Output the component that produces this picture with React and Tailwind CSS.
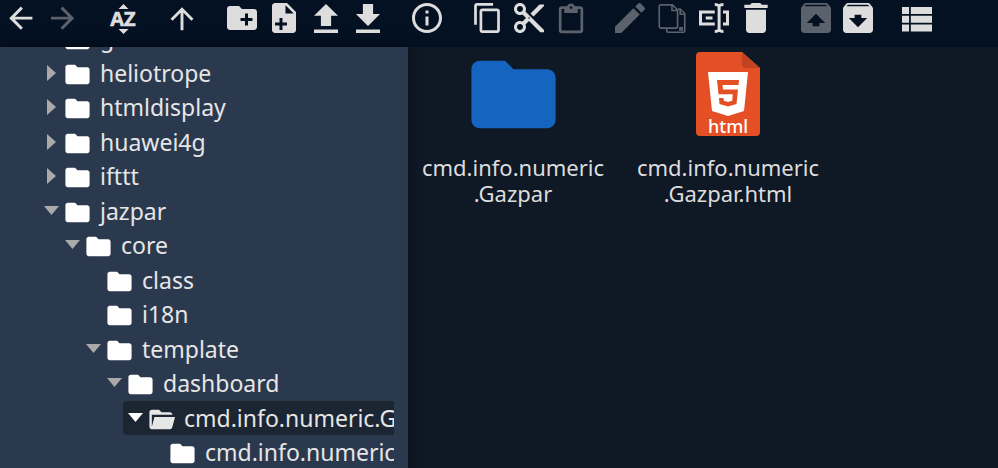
import React from 'react';
import clsx from 'clsx';

const ARCHIVE_BOX =
  'M20.54 5.23l-1.39-1.68C18.88 3.21 18.47 3 18 3H6c-.47 0-.88.21-1.16.55L3.46 5.23C3.17 5.57 3 6.02 3 6.5V19c0 1.1.9 2 2 2h14c1.1 0 2-.9 2-2V6.5c0-.48-.17-.93-.46-1.27z';

const FOLDER =
  'M10 4H4c-1.11 0-2 .89-2 2v12c0 1.1.89 2 2 2h16c1.1 0 2-.9 2-2V8c0-1.11-.9-2-2-2h-8l-2-2z';

const FOLDER_OPEN =
  'M19 20H4c-1.11 0-2-.9-2-2V6c0-1.11.89-2 2-2h6l2 2h7c1.1 0 2 .9 2 2H4v10l2.14-8h17.07l-2.28 8.5c-.23.87-1.01 1.5-1.93 1.5z';

// every glyph is drawn on a 24x24 grid, box overrides the view box
const icons = {
  back: {
    box: '-0.1 -0.4 24.6 24.6',
    d: 'M20 11v2H8l5.5 5.5-1.42 1.42L4.16 12l7.92-7.92L13.5 5.5 8 11h12z',
  },
  forward: {
    box: '-0.1 -0.4 24.6 24.6',
    d: 'M4 11v2h12l-5.5 5.5 1.42 1.42L19.84 12l-7.92-7.92L10.5 5.5 16 11H4z',
  },
  up: {
    box: '-0.4 -0.8 24.8 24.8',
    d: 'M13 20h-2V8l-5.5 5.5-1.42-1.42L12 4.16l7.92 7.92-1.42 1.42L13 8v12z',
  },
  newFolder: {
    d: 'M20 6h-8l-2-2H4c-1.11 0-1.99.89-1.99 2L2 18c0 1.11.89 2 2 2h16c1.11 0 2-.89 2-2V8c0-1.11-.89-2-2-2zm-1 8h-3v3h-2v-3h-3v-2h3V9h2v3h3v2z',
  },
  newFile: {
    d: 'M14 2H6c-1.11 0-2 .9-2 2v16c0 1.1.9 2 2 2h12c1.1 0 2-.9 2-2V8l-6-6zm-1 7V3.5L18.5 9H13zm-2 6v-3H9v3H6v2h3v3h2v-3h3v-2h-3z',
  },
  upload: { d: 'M8.6 17.4h6.8v-6.9H20l-8-7.9-8 7.9h4.6v6.9zM4 19.6h16V22H4v-2.4z' },
  download: { d: 'M20 9.4h-4.6V2.6H8.6v6.8H4l8 8 8-8zM4 19.6h16V22H4v-2.4z' },
  info: {
    d: 'M11 17h2v-6h-2v6zm1-15C6.48 2 2 6.48 2 12s4.48 10 10 10 10-4.48 10-10S17.52 2 12 2zm0 18c-4.41 0-8-3.59-8-8s3.59-8 8-8 8 3.59 8 8-3.59 8-8 8zM11 9h2V7h-2v2z',
  },
  copy: {
    box: '-1.8 -1.3 26.6 26.6',
    d: 'M16 1H4c-1.1 0-2 .9-2 2v14h2V3h12V1zm3 4H8c-1.1 0-2 .9-2 2v14c0 1.1.9 2 2 2h11c1.1 0 2-.9 2-2V7c0-1.1-.9-2-2-2zm0 16H8V7h11v14z',
  },
  cut: {
    d: 'M9.64 7.64c.23-.5.36-1.05.36-1.64 0-2.21-1.79-4-4-4S2 3.79 2 6s1.79 4 4 4c.59 0 1.14-.13 1.64-.36L10 12l-2.36 2.36C7.14 14.13 6.59 14 6 14c-2.21 0-4 1.79-4 4s1.79 4 4 4 4-1.79 4-4c0-.59-.13-1.14-.36-1.64L12 14l7.5 7.5H22v-1.5L9.64 7.64zM6 8c-1.1 0-2-.89-2-2s.9-2 2-2 2 .89 2 2-.9 2-2 2zm0 12c-1.1 0-2-.89-2-2s.9-2 2-2 2 .89 2 2-.9 2-2 2zm6-7.5c-.28 0-.5-.22-.5-.5s.22-.5.5-.5.5.22.5.5-.22.5-.5.5zM19 3l-6 6 2 2 7-7V3z',
  },
  paste: {
    box: '-1.3 -2.6 26.6 26.6',
    d: 'M19 2h-4.18C14.4.84 13.3 0 12 0c-1.3 0-2.4.84-2.82 2H5c-1.1 0-2 .9-2 2v16c0 1.1.9 2 2 2h14c1.1 0 2-.9 2-2V4c0-1.1-.9-2-2-2zm-7 0c.55 0 1 .45 1 1s-.45 1-1 1-1-.45-1-1 .45-1 1-1zm7 18H5V4h2v3h10V4h2v16z',
  },
  edit: {
    box: '1.2 1.2 21.6 21.6',
    d: 'M3 17.25V21h3.75L17.81 9.94l-3.75-3.75L3 17.25zM20.71 7.04c.39-.39.39-1.02 0-1.41l-2.34-2.34c-.39-.39-1.02-.39-1.41 0l-1.83 1.83 3.75 3.75 1.83-1.83z',
  },
  duplicate: {
    d: 'M4.5 3.2h7.8l3.4 3.5v11c0 .6-.4 1-1 1H4.5c-.6 0-1-.4-1-1V4.200c0-.6.4-1 1-1zM12 3v4h4M16 6h1.500l3 3v11.500c0 .6-.4 1-1 1h-10c-.6 0-1-.4-1-1V19M17.500 6.500V9.500H21M17.300 18.500h1.500v1.500h-1.500z',
    stroke: 1.1,
  },
  rename: {
    d: 'M12.5 3c1.2 0 2.3.4 2.900 1 .6-.6 1.700-1 2.900-1M12.500 21c1.200 0 2.300-.4 2.900-1 .6.6 1.700 1 2.900 1M15.400 4v16M12.500 8H3v8h9.500M18 8h3v8h-3M6.500 12H11',
    stroke: 2,
  },
  remove: {
    box: '1.2 1.2 21.6 21.6',
    d: 'M6 19c0 1.1.9 2 2 2h8c1.1 0 2-.9 2-2V7H6v12zM19 4h-3.5l-1-1h-5l-1 1H5v2h14V4z',
  },
  extract: {
    box: '1.2 1.2 21.6 21.6',
    d: ARCHIVE_BOX + 'M12 9.5l5.5 5.5H14v2h-4v-2H6.5L12 9.5zM5.12 5l.82-1h12l.93 1H5.12z',
  },
  archive: {
    box: '1.2 1.2 21.6 21.6',
    d: ARCHIVE_BOX + 'M12 17.5L6.5 12H10v-2h4v2h3.5L12 17.5zM5.12 5l.81-1h12l.94 1H5.12z',
  },
  list: {
    box: '2.3 1.1 20.4 20.4',
    d: 'M4 14h4v-4H4v4zm0 5h4v-4H4v4zM4 9h4V5H4v4zm5 5h12v-4H9v4zm0 5h12v-4H9v4zM9 5v4h12V5H9z',
  },
};

const toolGroups = [
  [{ icon: 'back', label: 'Back' }, { icon: 'forward', label: 'Forward', disabled: true }],
  [{ icon: 'sort', label: 'Sort' }],
  [{ icon: 'up', label: 'Go to parent folder' }],
  [
    { icon: 'newFolder', label: 'New folder' },
    { icon: 'newFile', label: 'New file' },
    { icon: 'upload', label: 'Upload files' },
    { icon: 'download', label: 'Download' },
  ],
  [{ icon: 'info', label: 'Get info' }],
  [
    { icon: 'copy', label: 'Copy' },
    { icon: 'cut', label: 'Cut' },
    { icon: 'paste', label: 'Paste', disabled: true },
  ],
  [
    { icon: 'edit', label: 'Edit file', disabled: true },
    { icon: 'duplicate', label: 'Duplicate', disabled: true },
    { icon: 'rename', label: 'Rename' },
    { icon: 'remove', label: 'Delete' },
  ],
  [
    { icon: 'extract', label: 'Extract files', disabled: true },
    { icon: 'archive', label: 'Create archive' },
  ],
  [{ icon: 'list', label: 'List view' }],
];

const tree = [
  { name: 'gsl', pad: 'pl-[44px]' },
  { name: 'heliotrope', pad: 'pl-[44px]', arrow: 'closed' },
  { name: 'htmldisplay', pad: 'pl-[44px]', arrow: 'closed' },
  { name: 'huawei4g', pad: 'pl-[44px]', arrow: 'closed' },
  { name: 'ifttt', pad: 'pl-[44px]', arrow: 'closed' },
  { name: 'jazpar', pad: 'pl-[44px]', arrow: 'open' },
  { name: 'core', pad: 'pl-[65px]', arrow: 'open' },
  { name: 'class', pad: 'pl-[86px]' },
  { name: 'i18n', pad: 'pl-[86px]' },
  { name: 'template', pad: 'pl-[86px]', arrow: 'open' },
  { name: 'dashboard', pad: 'pl-[107px]', arrow: 'open' },
  { name: 'cmd.info.numeric.Gazpar', pad: 'pl-[123px]', arrow: 'open', active: true },
  { name: 'cmd.info.numeric.Gazpar', pad: 'pl-[149px]' },
];

const Icon = ({ name }) => {
  const { d, box, stroke } = icons[name];
  return (
    <svg
      viewBox={box || '0 0 24 24'}
      className="size-9"
      fill={stroke ? 'none' : 'currentColor'}
      stroke={stroke ? 'currentColor' : 'none'}
      strokeWidth={stroke}
      fillRule="evenodd"
      aria-hidden="true"
    >
      <path d={d} />
    </svg>
  );
};

const SortIcon = () => (
  <svg viewBox="0 0 36 36" className="size-9" fill="currentColor" aria-hidden="true">
    <path d="M13.5 9L18.5 4l5 5zM13.5 29l5 5 5-5z" />
    <text
      x="18"
      y="26"
      textAnchor="middle"
      stroke="currentColor"
      strokeWidth="0.6"
      className="font-['Open_Sans','Noto_Sans',sans-serif] text-[20px] font-bold"
    >
      AZ
    </text>
  </svg>
);

const Toolbar = () => (
  <header className="flex h-[47px] shrink-0 items-start justify-between bg-[#041122] pr-[60px]">
    {toolGroups.map((group) => (
      <div key={group[0].icon} className="flex">
        {group.map(({ icon, label, disabled }) => (
          <button
            key={icon}
            type="button"
            aria-label={label}
            disabled={disabled}
            className={clsx(
              'flex w-[42px] justify-center',
              disabled ? 'text-[#5b626c]' : 'text-[#dddddd]'
            )}
          >
            {icon === 'sort' ? <SortIcon /> : <Icon name={icon} />}
          </button>
        ))}
      </div>
    ))}
  </header>
);

const Arrow = ({ state, active }) => (
  <svg
    viewBox="0 0 16 16"
    className={clsx('size-4 shrink-0', active ? 'text-white' : 'text-[#aaaaaa]')}
    fill="currentColor"
    aria-hidden="true"
  >
    {state === 'closed' && <path d="M3 0l9 8-9 8z" />}
    {state === 'open' && <path d="M0 3h15l-7.5 9z" />}
  </svg>
);

const TreeFolder = ({ open }) => (
  <svg
    viewBox="0 0 24 24"
    className={clsx('ml-[3px] mt-[3px] size-[29px] shrink-0', open ? 'text-[#e6e6e6]' : 'text-white')}
    fill="currentColor"
    aria-hidden="true"
  >
    <path d={open ? FOLDER_OPEN : FOLDER} />
  </svg>
);

const Sidebar = () => (
  <nav
    aria-label="Folders"
    className="z-10 w-[408px] shrink-0 overflow-hidden bg-[#2b394f] pr-[14px] shadow-[0_0_12px_rgba(0,0,0,0.5)]"
  >
    {/* the list is scrolled part way past its first row */}
    <ul className="-mt-[26px] text-[23px] leading-normal text-[#e6e6e6]">
      {tree.map(({ name, pad, arrow, active }, i) => (
        <li key={i} className={clsx('flex', pad)}>
          <a
            href="#"
            aria-current={active ? 'true' : undefined}
            className={clsx(
              'flex min-w-0 flex-1 items-center overflow-hidden whitespace-nowrap',
              active && 'rounded-l bg-[#1c2532] pl-[5px]'
            )}
          >
            <Arrow state={arrow} active={active} />
            <TreeFolder open={active} />
            <span className="ml-2">{name}</span>
          </a>
        </li>
      ))}
    </ul>
  </nav>
);

const HtmlFileIcon = () => (
  <svg viewBox="0 0 64 84" className="h-[84px] w-16" aria-hidden="true">
    <path d="M4 0h42l18 16v64a4 4 0 0 1-4 4H4a4 4 0 0 1-4-4V4a4 4 0 0 1 4-4z" fill="#e44f26" />
    <path d="M46 0l18 16H50a4 4 0 0 1-4-4z" fill="#c14320" />
    <path d="M12 20h40l-4 39-16 5-16-5z" fill="#fff" />
    <path
      d="M21 28h22l-.5 5H26.5l.5 4.5h15L40.5 52 32 54.5 23.5 52 23 46h4.500l.3 2.800 4.200 1.200 4.200-1.200.6-6.600H22.500z"
      fill="#e44f26"
    />
    <text
      x="32"
      y="81"
      textAnchor="middle"
      fill="#fff"
      className="font-['Noto_Sans','Open_Sans',sans-serif] text-[18px] font-medium"
    >
      html
    </text>
  </svg>
);

const files = [
  {
    name: ['cmd.info.numeric', '.Gazpar'],
    icon: (
      <svg viewBox="0 0 24 24" className="size-[101px]" fill="#1565c0" aria-hidden="true">
        <path d={FOLDER} />
      </svg>
    ),
  },
  { name: ['cmd.info.numeric', '.Gazpar.html'], icon: <HtmlFileIcon /> },
];

const FileGrid = () => (
  <main className="flex min-w-0 flex-1 flex-wrap content-start gap-[5px] bg-[#0f1825]">
    {files.map(({ name, icon }) => (
      <a
        key={name[1]}
        href="#"
        className="flex w-[210px] flex-col items-center text-center text-[22px] leading-[26px] text-[#dddddd]"
      >
        <span className="flex h-[94px] items-center">{icon}</span>
        <span className="mt-[13px]">
          {name[0]}
          <wbr />
          {name[1]}
        </span>
      </a>
    ))}
  </main>
);

const App = () => {
  return (
    <div className="flex h-screen flex-col overflow-hidden bg-[#0f1825] font-['Noto_Sans','Open_Sans',sans-serif]">
      <Toolbar />
      <div className="flex min-h-0 flex-1">
        <Sidebar />
        <FileGrid />
      </div>
    </div>
  );
};

export default App;
